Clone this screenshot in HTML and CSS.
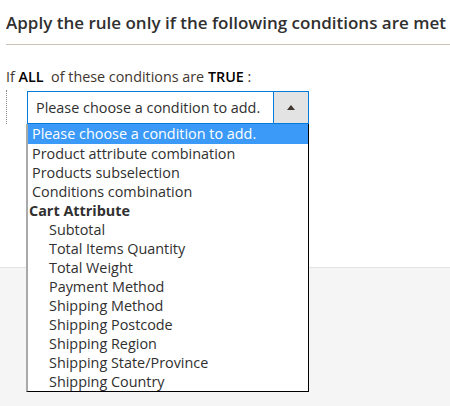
FILE: index.html
```html
<!DOCTYPE html>
<html>
<head>
<meta charset="utf-8">
<link rel="stylesheet" href="styles.css">
</head>
<body>
<div class="page">
  <section class="panel">
    <h2 class="title">Apply the rule only if the following conditions are met (leave blank for all products).</h2>
    <div class="rule-head">If <b class="param">ALL</b>&nbsp; of these conditions are <b class="param">TRUE</b> :</div>
    <div class="children">
      <div class="select-wrap">
        <div class="select">
          <span class="select-value">Please choose a condition to add.</span>
          <span class="select-btn"><span class="arrow"></span></span>
        </div>
        <ul class="dropdown">
          <li class="opt selected">Please choose a condition to add.</li>
          <li class="opt">Product attribute combination</li>
          <li class="opt">Products subselection</li>
          <li class="opt">Conditions combination</li>
          <li class="group">Cart Attribute</li>
          <li class="opt sub">Subtotal</li>
          <li class="opt sub">Total Items Quantity</li>
          <li class="opt sub">Total Weight</li>
          <li class="opt sub">Payment Method</li>
          <li class="opt sub">Shipping Method</li>
          <li class="opt sub">Shipping Postcode</li>
          <li class="opt sub">Shipping Region</li>
          <li class="opt sub">Shipping State/Province</li>
          <li class="opt sub">Shipping Country</li>
        </ul>
      </div>
    </div>
  </section>
  <section class="footer-area"></section>
</div>
</body>
</html>
```
FILE: styles.css
```css
html, body {
  margin: 0;
  padding: 0;
  height: 100%;
  overflow: hidden;
  background: #ffffff;
}
body {
  font-family: "Open Sans", "Noto Sans", sans-serif;
  color: #41362f;
}
.page {
  display: flex;
  flex-direction: column;
  height: 100%;
}
.panel {
  height: 267px;
  padding-left: 6px;
  box-sizing: border-box;
  flex: none;
}
.title {
  margin: 0;
  padding: 11px 0 10px;
  font-size: 17px;
  line-height: 23px;
  font-weight: 600;
  color: #303030;
  white-space: nowrap;
  overflow: hidden;
  border-bottom: 1px solid #cac3b4;
}
.rule-head {
  margin-top: 22px;
  font-size: 14.35px;
  line-height: 19px;
  color: #41362f;
}
.param {
  font-weight: 600;
  color: #000;
}
.children {
  margin-top: 4px;
  border-left: 1px dotted #888;
  padding-left: 20px;
  height: 34px;
}
.select-wrap {
  position: relative;
  width: 282px;
  padding-top: 1px;
}
.select {
  display: flex;
  height: 33px;
  box-sizing: border-box;
  border: 1px solid #007bdb;
  background: #fff;
}
.select-value {
  flex: 1;
  padding-left: 8px;
  font-size: 14.4px;
  line-height: 31px;
  color: #303030;
  white-space: nowrap;
}
.select-btn {
  width: 34px;
  border-left: 1px solid #007bdb;
  background: #e3e3e3;
  display: flex;
  align-items: center;
  justify-content: center;
}
.arrow {
  width: 0;
  height: 0;
  border-left: 4px solid transparent;
  border-right: 4px solid transparent;
  border-bottom: 5px solid #41362f;
}
.dropdown {
  position: absolute;
  left: -1px;
  top: 34px;
  width: 283px;
  box-sizing: border-box;
  margin: 0;
  padding: 0;
  list-style: none;
  background: #fff;
  border-left: 2px solid #a9a9a9;
  border-right: 1px solid #000;
  border-bottom: 1px solid #000;
  font-size: 14.4px;
}
.dropdown li {
  height: 19px;
  line-height: 19px;
  white-space: nowrap;
  color: #303030;
}
.opt {
  padding-left: 4px;
}
.opt.selected {
  height: 20px;
  line-height: 20px;
  background: #3b99f7;
  color: #fff;
}
.group {
  padding-left: 1px;
  font-weight: 700;
}
.opt.sub {
  padding-left: 21px;
}
.footer-area {
  flex: 1;
  border-top: 1px solid #e3e3e3;
  background: #f5f5f5;
}
```
